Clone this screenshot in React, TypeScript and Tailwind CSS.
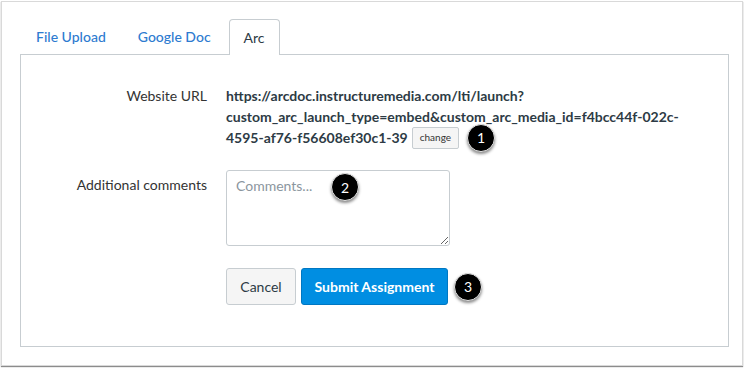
import React from "react";

function Badge({ n }: { n: number }) {
    return (
        <span className="inline-flex items-center justify-center w-[28px] h-[28px] rounded-full bg-black text-white text-[14px] border border-[#e5e5e5] shadow-[0_2px_3px_rgba(0,0,0,0.45)]">
            {n}
        </span>
    );
}

export default function App() {
    return (
        <div className="w-[745px] h-[369px] bg-white overflow-hidden" style={{ fontFamily: "Lato, 'Open Sans', sans-serif" }}>
            <div className="ml-[1px] mt-[1px] w-[742px] h-[365px] border border-[#d9d9d9] shadow-[0_1px_1px_rgba(0,0,0,0.45)] pl-[18px] pt-[17px]">
                {/* Tabs */}
                <div className="flex items-end h-[35px] text-[14px]">
                    <div className="px-[16px] h-[35px] flex items-center text-[#2d7bd0] font-medium">File Upload</div>
                    <div className="px-[16px] h-[35px] flex items-center text-[#2d7bd0] font-medium">Google Doc</div>
                    <div className="ml-[2px] px-[14px] h-[36px] -mb-px flex items-center text-[#2d3b45] bg-white border border-b-0 border-[#c7cdd1] rounded-t-[4px] relative z-10">Arc</div>
                </div>

                {/* Panel */}
                <div className="w-[709px] h-[293px] border border-[#c7cdd1] pt-[30px] text-[14px] text-[#333]">
                    <div className="flex">
                        <div className="w-[186px] text-right leading-[21px]">Website URL</div>
                        <div className="ml-[19px] font-bold leading-[21px] text-[#2d3b45]">
                            <div>https://arcdoc.instructuremedia.com/lti/launch?</div>
                            <div>custom_arc_launch_type=embed&amp;custom_arc_media_id=f4bcc44f-022c-</div>
                            <div className="flex items-center h-[21px]">
                                <span>4595-af76-f56608ef30c1-39</span>
                                <span className="ml-[4px] inline-flex items-center px-[7px] h-[22px] border border-[#c7cdd1] bg-[#f5f5f5] rounded-[2px] text-[10px] font-normal text-[#333]">change</span>
                                <span className="ml-[8px] font-normal flex"><Badge n={1} /></span>
                            </div>
                        </div>
                    </div>

                    <div className="flex mt-[22px]">
                        <div className="w-[186px] text-right pt-[4px] leading-[21px]">Additional comments</div>
                        <div className="ml-[19px] relative">
                            <textarea
                                placeholder="Comments..."
                                className="block w-[224px] h-[76px] border border-[#c7cdd1] rounded-[3px] px-[9px] py-[4px] text-[14px] leading-[21px] placeholder:text-[#8b969e] outline-none resize-y"
                            />
                            <span className="absolute left-[105px] top-[3px] flex"><Badge n={2} /></span>
                        </div>
                    </div>

                    <div className="flex items-center mt-[22px] ml-[205px]">
                        <button className="w-[70px] h-[37px] bg-[#f5f5f5] border border-[#c7cdd1] rounded-[3px] text-[#2d3b45] text-[14px]">Cancel</button>
                        <button className="ml-[5px] w-[147px] h-[37px] bg-[#008ee2] border border-[#0077c2] rounded-[3px] text-white text-[14px] font-bold">Submit Assignment</button>
                        <span className="ml-[6px] flex"><Badge n={3} /></span>
                    </div>
                </div>
            </div>
        </div>
    );
}
